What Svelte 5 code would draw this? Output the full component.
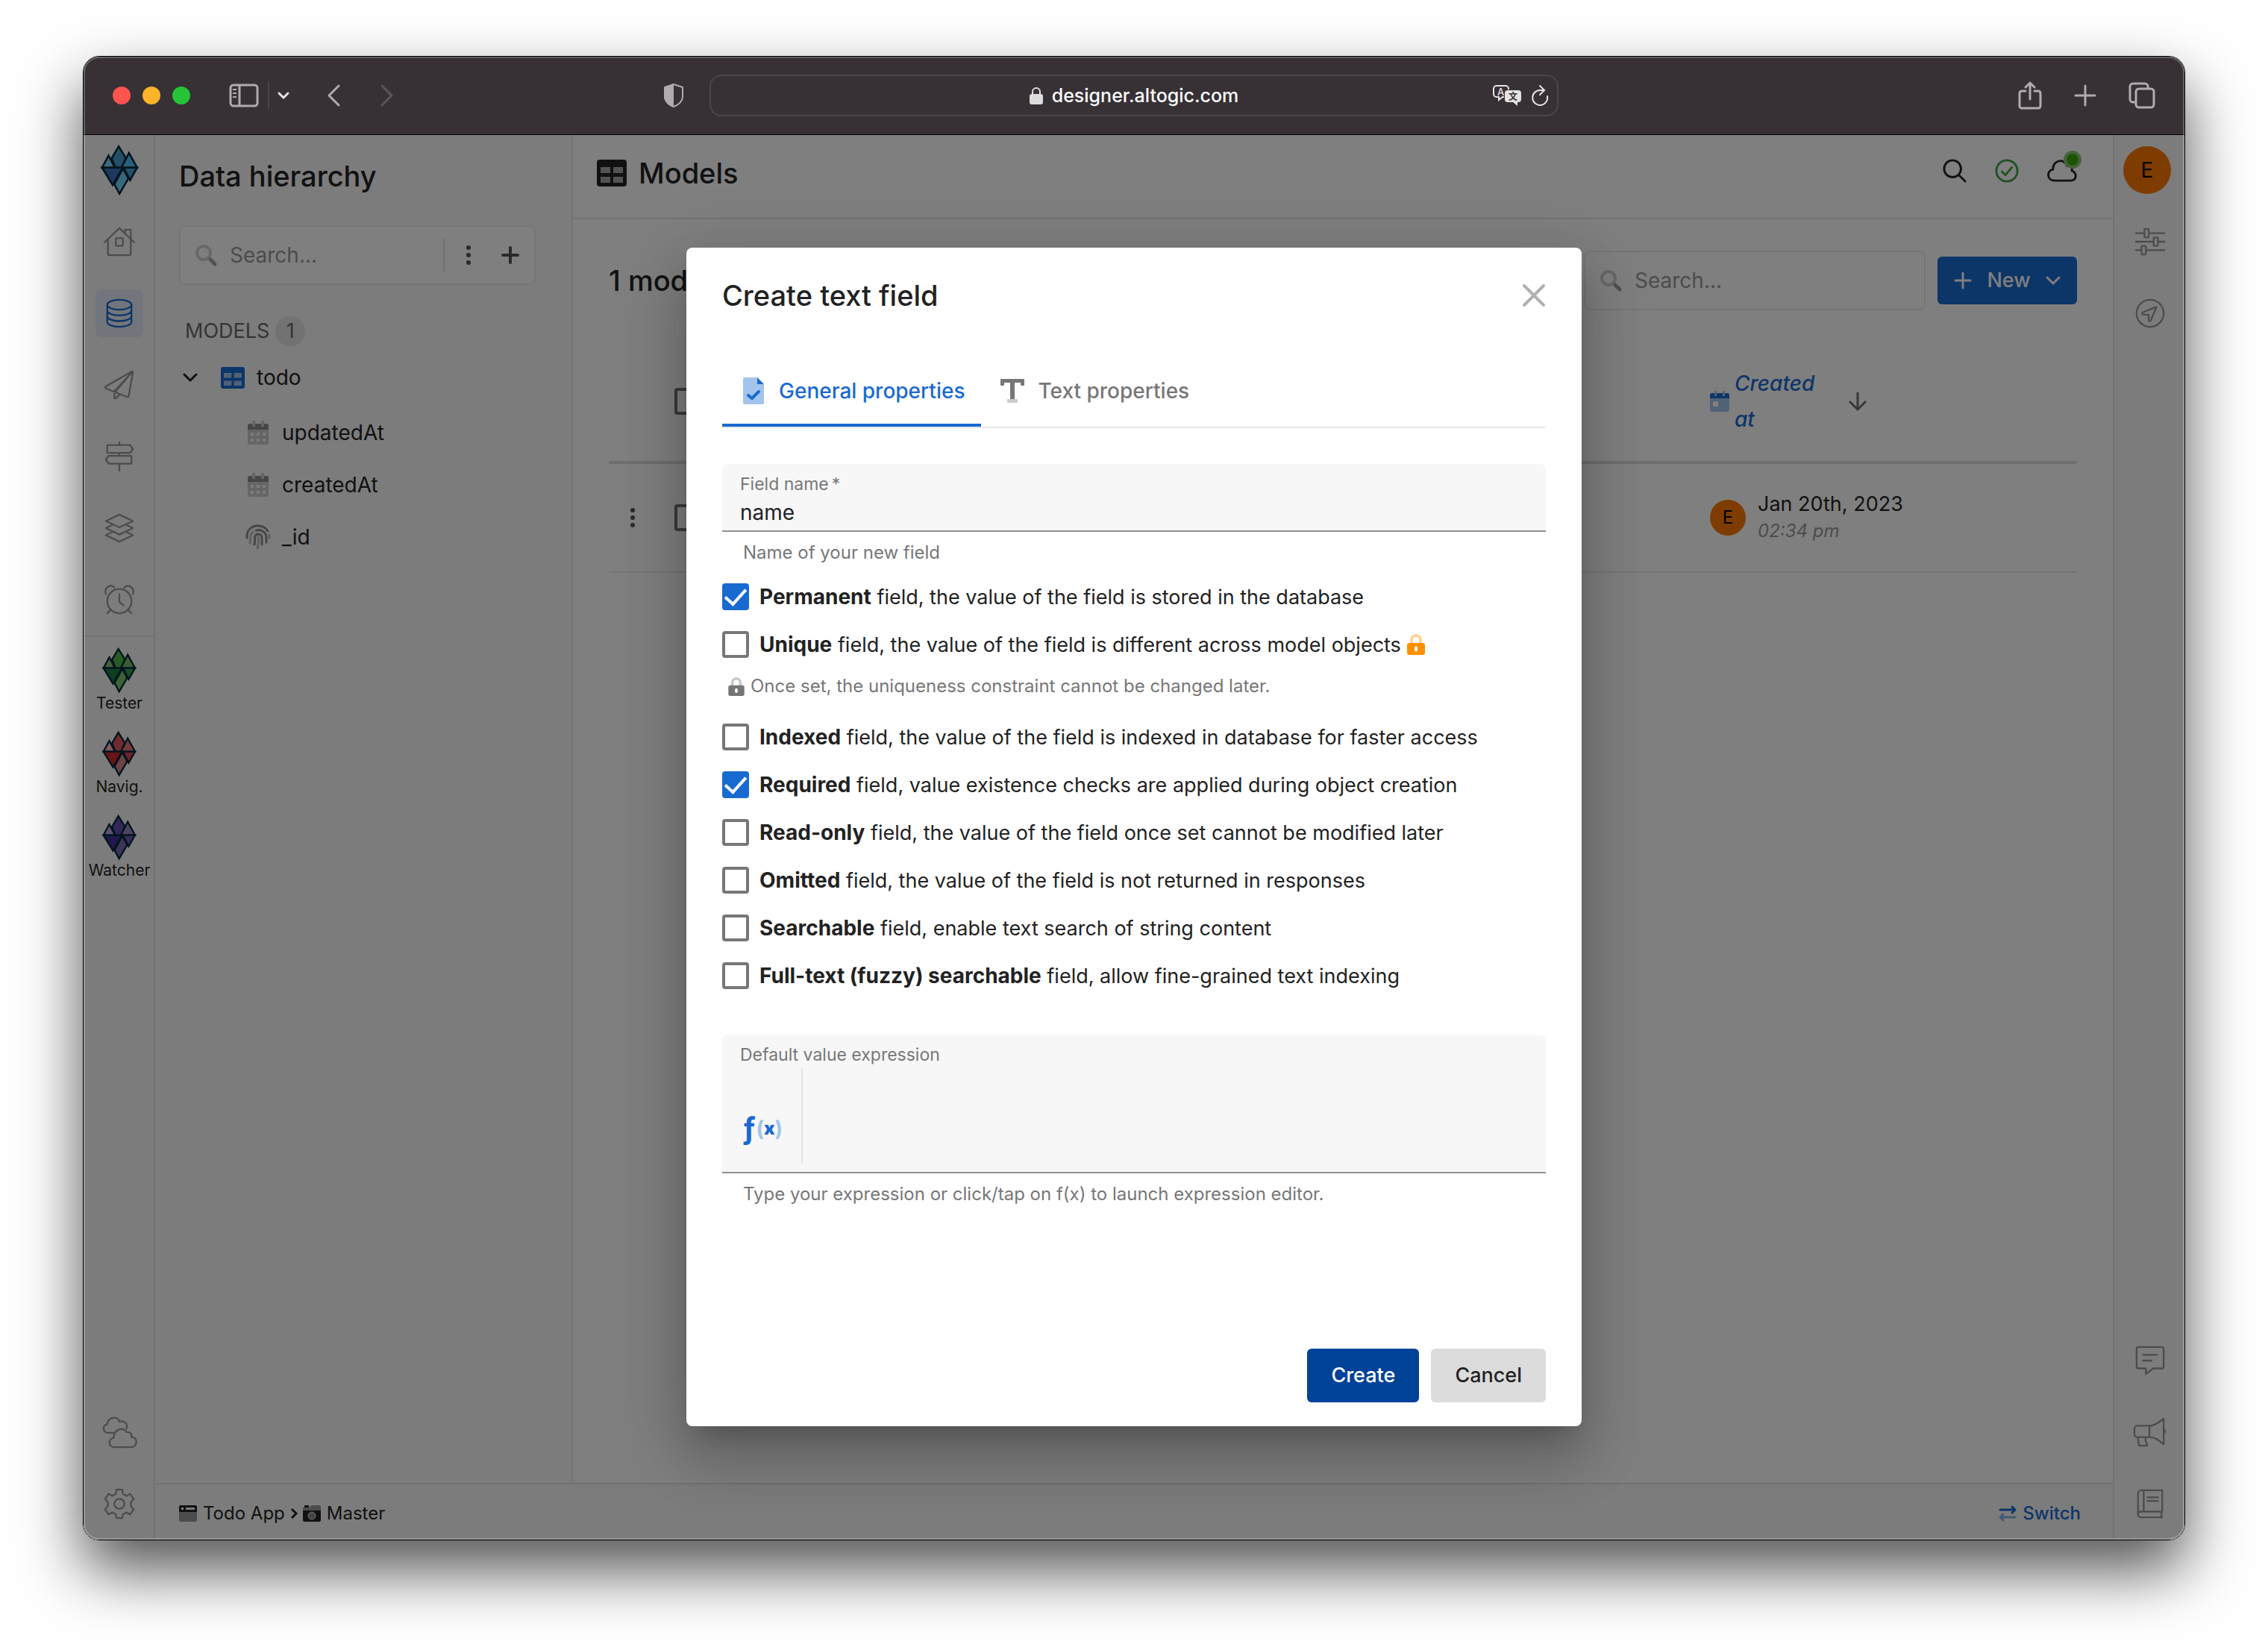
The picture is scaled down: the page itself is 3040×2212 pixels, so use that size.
<script>
  let fieldName = $state('name');
  let expression = $state('');

  const shortcuts = ['home', 'database', 'plane', 'signs', 'layers', 'alarm'];
  const labels = {
    home: 'Home', database: 'Data', plane: 'Endpoints', signs: 'Routes', layers: 'Services', alarm: 'Schedules',
    clouds: 'Deployments', gear: 'Settings', sliders: 'Preferences', compass: 'Explore',
    chat: 'Feedback', megaphone: 'Announcements', book: 'Documentation'
  };

  const blue = ['#489cd0', '#80d4fc', '#56bef4', '#3874c0', '#74cef8', '#48a0d4'];
  const tools = [
    { name: 'Tester', colors: ['#4cb844', '#8ebc78', '#74bc6a', '#187c40', '#7ac46c', '#369a50'] },
    { name: 'Navig.', colors: ['#e4545c', '#ffb4bc', '#e8747a', '#d02830', '#dc8488', '#d84850'] },
    { name: 'Watcher', colors: ['#6850b4', '#bca8e0', '#9c88c0', '#403098', '#7c68b0', '#7058a8'] }
  ];

  const fields = [
    { name: 'updatedAt', icon: 'calendar' },
    { name: 'createdAt', icon: 'calendar' },
    { name: '_id', icon: 'fingerprint' }
  ];

  let primary = $state([
    { name: 'Permanent', text: 'field, the value of the field is stored in the database', on: true },
    { name: 'Unique', text: 'field, the value of the field is different across model objects', on: false, locked: true }
  ]);
  let secondary = $state([
    { name: 'Indexed', text: 'field, the value of the field is indexed in database for faster access', on: false },
    { name: 'Required', text: 'field, value existence checks are applied during object creation', on: true },
    { name: 'Read-only', text: 'field, the value of the field once set cannot be modified later', on: false },
    { name: 'Omitted', text: 'field, the value of the field is not returned in responses', on: false },
    { name: 'Searchable', text: 'field, enable text search of string content', on: false },
    { name: 'Full-text (fuzzy) searchable', text: 'field, allow fine-grained text indexing', on: false }
  ]);
</script>

{#snippet gem(colors)}
  <svg class="gem" viewBox="0 0 140 190" stroke="#00283a" stroke-width="7" stroke-linejoin="miter" aria-hidden="true">
    <path d="M66 8 40 52 54 86H78L92 50Z" fill={colors[0]} />
    <path d="M29 42 5 86H52Z" fill={colors[1]} />
    <path d="M104 32 76 86H134Z" fill={colors[2]} />
    <path d="M84 86H134L108 132Z" fill={colors[5]} />
    <path d="M5 86H81L44 150Z" fill={colors[3]} />
    <path d="M82 89 102 126 69 182 50 147Z" fill={colors[4]} />
  </svg>
{/snippet}

{#snippet railIcon(name)}
  <svg class="line" viewBox="0 0 44 44" aria-hidden="true">
    {#if name === 'home'}
      <path d="M1 23 22 3 43 23M6 19V39a2 2 0 0 0 2 2H36a2 2 0 0 0 2-2V19M30 10V5H38V18" />
      <rect x="17" y="17" width="10" height="11" rx="2" />
    {:else if name === 'database'}
      <ellipse cx="22" cy="10" rx="17" ry="7" />
      <path d="M5 10V34c0 4 8 7 17 7s17-3 17-7V10M5 18c0 4 8 7 17 7s17-3 17-7M5 26c0 4 8 7 17 7s17-3 17-7" />
    {:else if name === 'plane'}
      <path d="M40 3 3 24c-1 1-1 2 0 3L33 39c1 0 2 0 2-1L41 4c0-1 0-1-1-1ZM40 4 15 31V41l2 0 6-6M17 31 33 12" />
    {:else if name === 'signs'}
      <path d="M22 2V6M22 17V21M22 32V42M6 6H37l4 5.500-4 5.500H6a1 1 0 0 1-1-1V7a1 1 0 0 1 1-1ZM38 21H7L3 26.500 7 32H38a1 1 0 0 0 1-1V22a1 1 0 0 0-1-1Z" />
    {:else if name === 'layers'}
      <path d="M22 3 41 12 22 21 3 12ZM13 17 3 22 22 31 41 22 31 17M13 27 3 32 22 41 41 32 31 27" />
    {:else if name === 'alarm'}
      <circle cx="22" cy="24" r="17" />
      <path d="M22 14V25L28 30M10 36 5 41M34 36 39 41M3 14C0 5 10-1 15 5M41 14C44 5 34-1 29 5" />
    {:else if name === 'clouds'}
      <path d="M14 23H6C-2 22-2 12 5 11 6 0 20-1 22 7c8-2 12 4 10 10" />
      <path d="M15 43C6 43 6 31 14 30 14 17 29 14 32 22c5-1 8 3 7 7 9 0 9 13 0 14Z" />
    {:else if name === 'gear'}
      <path d="M18 2H26L27 8 32 11 37 8 42 15 38 20V25L42 30 37 37 32 34 27 37 26 42H18L17 37 12 34 7 37 2 30 6 25V20L2 15 7 8 12 11 17 8Z" />
      <circle cx="22" cy="22" r="7" />
    {:else if name === 'sliders'}
      <path d="M2 10H14M21 10H42M2 22H27M34 22H42M2 34H9M16 34H42" />
      <rect x="14" y="4" width="6" height="12" rx="1" />
      <rect x="27" y="16" width="6" height="12" rx="1" />
      <rect x="10" y="28" width="6" height="12" rx="1" />
    {:else if name === 'compass'}
      <circle cx="22" cy="22" r="19" />
      <path d="M31 13 11 21c-1 1 0 3 1 3h8v8c0 1 2 2 3 0Z" />
    {:else if name === 'chat'}
      <path d="M6 3H38a3 3 0 0 1 3 3V30a3 3 0 0 1-3 3H26L16 41V33H6a3 3 0 0 1-3-3V6a3 3 0 0 1 3-3ZM12 14H32M12 22H24" />
    {:else if name === 'megaphone'}
      <path d="M21 13H4a4 4 0 0 0-4 4V25a4 4 0 0 0 4 4H21ZM21 13C30 13 35 7 41 3V39C35 34 30 29 21 29M5 29C5 35 6 41 8 41H18L17 37C15 35 15 32 16 29M41 18q4 3 0 6" />
    {:else if name === 'book'}
      <path d="M39 33V3H10a5 5 0 0 0-5 5V37M39 33H9a4 4 0 0 0 0 8H39M38 33V41M13 3V33M18 13H33M18 18H33" />
    {/if}
  </svg>
{/snippet}

{#snippet railButton(name, active = false)}
  <button class="rail-btn" class:active aria-label={labels[name]}>{@render railIcon(name)}</button>
{/snippet}

{#snippet grid(cls)}
  <svg class={cls} viewBox="0 0 40 36" aria-hidden="true">
    <rect width="40" height="36" rx="4" fill="currentColor" />
    <path d="M5 10H18V18H5ZM22 10H35V18H22ZM5 23H18V31H5ZM22 23H35V31H22Z" fill="#fff" opacity=".6" />
  </svg>
{/snippet}

{#snippet magnifier()}
  <svg class="magnifier" viewBox="0 0 28 28" fill="none" aria-hidden="true">
    <circle cx="11" cy="11" r="9" stroke="#d0d0d0" stroke-width="4" />
    <path d="M20 20 26 26" stroke="#a0a0a0" stroke-width="5" stroke-linecap="round" />
  </svg>
{/snippet}

{#snippet dots()}
  <svg class="dots" viewBox="0 0 8 28" fill="currentColor" aria-hidden="true">
    <circle cx="4" cy="4" r="3" /><circle cx="4" cy="14" r="3" /><circle cx="4" cy="24" r="3" />
  </svg>
{/snippet}

{#snippet plus()}
  <svg class="plus" viewBox="0 0 24 24" stroke="currentColor" stroke-width="4" stroke-linecap="round" aria-hidden="true">
    <path d="M12 2V22M2 12H22" />
  </svg>
{/snippet}

{#snippet lock()}
  <svg class="lock" viewBox="0 0 24 28" fill="none" aria-hidden="true">
    <path d="M6 13V8a6 6 0 0 1 12 0V13" stroke="currentColor" stroke-width="4" opacity=".4" />
    <path fill-rule="evenodd" d="M3 12H21a3 3 0 0 1 3 3V25a3 3 0 0 1-3 3H3a3 3 0 0 1-3-3V15a3 3 0 0 1 3-3ZM12 16.500a2 2 0 0 0-2 2V21.500a2 2 0 0 0 4 0V18.500a2 2 0 0 0-2-2Z" fill="currentColor" />
  </svg>
{/snippet}

{#snippet option(item)}
  <label class="option">
    <input type="checkbox" bind:checked={item.on} />
    <span><b>{item.name}</b> {item.text}</span>
    {#if item.locked}{@render lock()}{/if}
  </label>
{/snippet}

<div class="desktop">
  <div class="window">
    <header class="chrome">
      <div class="chrome-left">
        <span class="lights"><i class="red"></i><i class="amber"></i><i class="green"></i></span>
        <button aria-label="Sidebar">
          <svg width="40" height="32" viewBox="0 0 40 32" fill="none" stroke="#b0abae" stroke-width="3">
            <rect x="2" y="2" width="36" height="28" rx="4" /><path d="M14 2V30" />
            <path d="M5 8H10M5 13H10M5 18H10" stroke-width="2" />
          </svg>
        </button>
        <span class="rule"></span>
        <button aria-label="Tab groups">
          <svg width="16" height="12" viewBox="0 0 16 12" fill="none" stroke="#e4e2e3" stroke-width="3" stroke-linecap="round" stroke-linejoin="round"><path d="M2 3 8 9 14 3" /></svg>
        </button>
        <button class="back" aria-label="Back">
          <svg width="18" height="30" viewBox="0 0 18 30" fill="none" stroke="#b0abae" stroke-width="3" stroke-linecap="round" stroke-linejoin="round"><path d="M16 2 3 15 16 28" /></svg>
        </button>
        <button class="forward" aria-label="Forward">
          <svg width="18" height="30" viewBox="0 0 18 30" fill="none" stroke="#5b565a" stroke-width="3" stroke-linecap="round" stroke-linejoin="round"><path d="M2 2 15 15 2 28" /></svg>
        </button>
        <button class="shield" aria-label="Privacy report">
          <svg width="28" height="34" viewBox="0 0 28 34"><path d="M14 2 26 6V18C26 25 20 30 14 32 8 30 2 25 2 18V6Z" fill="none" stroke="#b0abae" stroke-width="2" stroke-linejoin="round" /><path d="M14 1 1 6V18C1 25 7 31 14 33Z" fill="#b0abae" /></svg>
        </button>
      </div>
      <div class="address">
        <svg width="18" height="24" viewBox="0 0 18 24" aria-hidden="true"><path d="M4 11V7a5 5 0 0 1 10 0V11" fill="none" stroke="#dedcdd" stroke-width="2" /><rect y="10" width="18" height="14" rx="3" fill="#dedcdd" /></svg>
        <span>designer.altogic.com</span>
        <div class="address-tools">
          <button aria-label="Translate">
            <svg width="38" height="28" viewBox="0 0 38 28" aria-hidden="true">
              <path d="M5 1H17a4 4 0 0 1 4 4V6M15 16H13L8 20V16H5a4 4 0 0 1-4-4V5a4 4 0 0 1 4-4" fill="none" stroke="#e4e2e3" stroke-width="2" />
              <path d="M20 7H34a4 4 0 0 1 4 4V19a4 4 0 0 1-4 4H33V28L27 23H20a4 4 0 0 1-4-4V11a4 4 0 0 1 4-4Z" fill="#e4e2e3" />
              <text x="6" y="14" font-size="13" fill="#e4e2e3">A</text>
              <text x="21" y="20" font-size="12" font-weight="700" fill="#373135">文</text>
            </svg>
          </button>
          <button aria-label="Reload">
            <svg width="22" height="28" viewBox="0 0 22 28" fill="none" stroke="#e4e2e3" stroke-width="2" stroke-linecap="round" aria-hidden="true"><path d="M21 15A10 10 0 1 1 11 7H16M11 1 17 7 11 13" /></svg>
          </button>
        </div>
      </div>
      <div class="chrome-right">
        <button aria-label="Share"><svg width="32" height="38" viewBox="0 0 32 38" fill="none" stroke="#b0abae" stroke-width="3" stroke-linecap="round" stroke-linejoin="round"><path d="M10 13H5a3 3 0 0 0-3 3V33a3 3 0 0 0 3 3H27a3 3 0 0 0 3-3V16a3 3 0 0 0-3-3H22M16 24V2M10 8 16 2 22 8" /></svg></button>
        <button aria-label="New tab"><svg width="28" height="28" viewBox="0 0 28 28" stroke="#b0abae" stroke-width="3" stroke-linecap="round"><path d="M14 1V27M1 14H27" /></svg></button>
        <button aria-label="Tab overview"><svg width="36" height="36" viewBox="0 0 36 36" fill="none" stroke="#b0abae" stroke-width="3"><rect x="10" y="9" width="24" height="25" rx="4" /><path d="M9 27H6a4 4 0 0 1-4-4V6A4 4 0 0 1 6 2H22a4 4 0 0 1 4 4V8" /></svg></button>
      </div>
    </header>

    <div class="app">
      <nav class="rail left">
        <a class="brand" href="#home" aria-label="Altogic">{@render gem(blue)}</a>
        {#each shortcuts as name}{@render railButton(name, name === 'database')}{/each}
        <div class="tools">
          {#each tools as tool}
            <button class="tool">{@render gem(tool.colors)}<span>{tool.name}</span></button>
          {/each}
        </div>
        <span class="push"></span>
        {@render railButton('clouds')}
        {@render railButton('gear')}
      </nav>

      <div class="workspace">
        <div class="columns">
          <aside class="sidebar">
            <h1>Data hierarchy</h1>
            <div class="search">
              {@render magnifier()}
              <input type="text" placeholder="Search..." aria-label="Search hierarchy" />
              <span class="search-rule"></span>
              <button aria-label="More">{@render dots()}</button>
              <button aria-label="Add">{@render plus()}</button>
            </div>
            <p class="group">MODELS <span>1</span></p>
            <ul class="tree">
              <li>
                <button class="node">
                  <svg width="20" height="12" viewBox="0 0 20 12" fill="none" stroke="#222" stroke-width="3" stroke-linecap="round" stroke-linejoin="round" aria-hidden="true"><path d="M2 2 10 10 18 2" /></svg>
                  {@render grid('grid-small')}
                  todo
                </button>
                <ul>
                  {#each fields as field}
                    <li>
                      <button class="leaf">
                        {#if field.icon === 'calendar'}
                          <svg width="32" height="32" viewBox="0 0 32 32" aria-hidden="true">
                            <path d="M2 12H30V29a3 3 0 0 1-3 3H5a3 3 0 0 1-3-3ZM8 0H12V8H8ZM20 0H24V8H20Z" fill="#cacaca" />
                            <path d="M5 4H8V8H12V4H20V8H24V4H27a3 3 0 0 1 3 3V12H2V7a3 3 0 0 1 3-3Z" fill="#8c8c8c" />
                            <path d="M6 16H10V20H6ZM14 16H18V20H14ZM22 16H26V20H22ZM6 24H10V28H6ZM14 24H18V28H14ZM22 24H26V28H22Z" fill="#f8f8f8" />
                          </svg>
                        {:else}
                          <svg width="32" height="32" viewBox="0 0 32 32" fill="none" stroke-width="3" stroke-linecap="round" aria-hidden="true">
                            <path d="M1 17C0 5 10 0 17 1 23 1 27 5 29 8M13 7c8-2 14 3 14 10V23M11 26C12 20 11 17 12 15c1-4 8-4 9 1V26" stroke="#8c8c8c" />
                            <path d="M31 13V17M5 24C6 20 5 18 6 14 7 11 8 10 9 9M16 16C17 22 16 27 15 31" stroke="#bcbcbc" />
                          </svg>
                        {/if}
                        {field.name}
                      </button>
                    </li>
                  {/each}
                </ul>
              </li>
            </ul>
          </aside>

          <main>
            <div class="page-head">
              {@render grid('grid-large')}
              <h1>Models</h1>
              <div class="status">
                <button aria-label="Search"><svg width="32" height="32" viewBox="0 0 34 34" fill="none" stroke="#222" stroke-width="3" stroke-linecap="round"><circle cx="14" cy="14" r="12" /><path d="M23 23 32 32" /></svg></button>
                <button aria-label="Status"><svg width="32" height="32" viewBox="0 0 34 34" fill="none" stroke="#40a044" stroke-width="3" stroke-linecap="round"><circle cx="17" cy="17" r="15" /><path d="M10 18 15 23 24 12" /></svg></button>
                <button class="cloud" aria-label="Deployment"><svg width="40" height="30" viewBox="0 0 42 32" fill="none" stroke="#222" stroke-width="3"><path d="M11 30C-2 30-1 15 8 14 7 1 24-3 28 9 33 8 36 11 35 16 43 19 42 30 33 30Z" /></svg><i></i></button>
              </div>
            </div>
            <div class="toolbar">
              <h2>1 model</h2>
              <div class="search wide">{@render magnifier()}<input type="text" placeholder="Search..." aria-label="Search models" /></div>
              <button class="new">{@render plus()} New
                <svg width="20" height="12" viewBox="0 0 20 12" fill="none" stroke="#fff" stroke-width="3" stroke-linecap="round" stroke-linejoin="round" aria-hidden="true"><path d="M2 2 10 10 18 2" /></svg>
              </button>
            </div>
            <table>
              <thead>
                <tr>
                  <th class="c-menu"></th>
                  <th class="c-check"><input type="checkbox" aria-label="Select all" /></th>
                  <th>Name</th>
                  <th class="c-date">
                    <button class="sort">
                      <svg width="26" height="28" viewBox="0 0 26 28" aria-hidden="true">
                        <path d="M0 10H26V25a3 3 0 0 1-3 3H3a3 3 0 0 1-3-3Z" fill="#a3c3ec" /><path d="M3 3H23a3 3 0 0 1 3 3V10H0V6A3 3 0 0 1 3 3Z" fill="#186ad0" /><path d="M6 0H9V7H6ZM17 0H20V7H17Z" fill="#a3c3ec" /><path d="M4 14H11V21H4Z" fill="#fff" />
                      </svg>
                      <em>Created at</em>
                      <svg width="26" height="26" viewBox="0 0 26 26" fill="none" stroke="#707070" stroke-width="3" aria-hidden="true"><path d="M13 1V24M2 13 13 24 24 13" /></svg>
                    </button>
                  </th>
                </tr>
              </thead>
              <tbody>
                <tr>
                  <td class="c-menu"><button aria-label="Row menu">{@render dots()}</button></td>
                  <td class="c-check"><input type="checkbox" aria-label="Select todo" /></td>
                  <td>todo</td>
                  <td class="c-date">
                    <div class="created">
                      <span class="avatar small">E</span>
                      <div><p>Jan 20th, 2023</p><p class="time">02:34 pm</p></div>
                    </div>
                  </td>
                </tr>
              </tbody>
            </table>
          </main>
        </div>

        <footer class="statusbar">
          <svg width="24" height="22" viewBox="0 0 24 22" aria-hidden="true"><path d="M0 9H24V20a2 2 0 0 1-2 2H2a2 2 0 0 1-2-2Z" fill="#999" /><path fill-rule="evenodd" d="M2 0H22a2 2 0 0 1 2 2V9H0V2A2 2 0 0 1 2 0ZM3 3H6V6H3ZM9 3H21V6H9Z" fill="#222" /></svg>
          <span>Todo App</span>
          <svg width="8" height="16" viewBox="0 0 8 16" fill="none" stroke="#222" stroke-width="3" aria-hidden="true"><path d="M1 2 7 8 1 14" /></svg>
          <svg width="24" height="22" viewBox="0 0 24 22" aria-hidden="true"><path d="M2 0H8V3H2Z" fill="#222" /><path d="M0 7V3H8L12 0H22a2 2 0 0 1 2 2V7Z" fill="#999" /><path d="M0 7H24V20a2 2 0 0 1-2 2H2a2 2 0 0 1-2-2Z" fill="#222" /><circle cx="12" cy="14" r="5" fill="#888" stroke="#ddd" /></svg>
          <span>Master</span>
          <a class="switch" href="#switch">
            <svg width="24" height="20" viewBox="0 0 24 20" fill="none" stroke="#186ad0" stroke-width="3" stroke-linecap="round" stroke-linejoin="round" aria-hidden="true"><path d="M2 5H22M18 1 22 5 18 9" /><path d="M22 15H2M6 11 2 15 6 19" opacity=".5" /></svg>
            Switch
          </a>
        </footer>
      </div>

      <nav class="rail right">
        <button class="avatar account" aria-label="Account">E</button>
        {@render railButton('sliders')}
        {@render railButton('compass')}
        <span class="push"></span>
        {@render railButton('chat')}
        {@render railButton('megaphone')}
        {@render railButton('book')}
      </nav>

      <div class="scrim">
        <div class="modal" role="dialog" aria-modal="true" aria-labelledby="dialog-title">
          <div class="modal-head">
            <h2 id="dialog-title">Create text field</h2>
            <button aria-label="Close"><svg width="32" height="32" viewBox="0 0 32 32" stroke="#b0b0b0" stroke-width="4" stroke-linecap="round"><path d="M3 3 29 29M29 3 3 29" /></svg></button>
          </div>
          <div class="tabs" role="tablist">
            <button class="tab selected" role="tab" aria-selected="true">
              <svg width="36" height="36" viewBox="0 0 36 36" aria-hidden="true"><path d="M6 0H23V9H32V34a2 2 0 0 1-2 2H6a2 2 0 0 1-2-2V2A2 2 0 0 1 6 0Z" fill="#a3c4ec" /><path d="M23 0 32 9H23Z" fill="#186ad0" /><path d="M11 24 16 28 25 19" fill="none" stroke="#186ad0" stroke-width="4" stroke-linecap="round" /></svg>
              General properties
            </button>
            <button class="tab" role="tab" aria-selected="false">
              <svg width="36" height="36" viewBox="0 0 36 36" fill="#777" aria-hidden="true"><rect x="2" y="2" width="32" height="5" rx="1" /><rect x="2" y="2" width="5" height="9" rx="1" /><rect x="29" y="2" width="5" height="9" rx="1" /><rect x="15" y="4" width="6" height="26" /><rect x="11" y="29" width="14" height="5" rx="1" fill="#cbcbcb" /></svg>
              Text properties
            </button>
          </div>

          <div class="filled">
            <label for="field-name">Field name<span class="star">*</span></label>
            <input id="field-name" type="text" bind:value={fieldName} />
          </div>
          <p class="hint">Name of your new field</p>

          <div class="options">
            {#each primary as item}{@render option(item)}{/each}
            <p class="note">{@render lock()} Once set, the uniqueness constraint cannot be changed later.</p>
            {#each secondary as item}{@render option(item)}{/each}
          </div>

          <div class="filled expression">
            <label for="expression">Default value expression</label>
            <div class="editor">
              <button aria-label="Launch expression editor"><span class="fn">ƒ</span><span class="paren">(</span><span class="arg">x</span><span class="paren">)</span></button>
              <textarea id="expression" bind:value={expression}></textarea>
            </div>
          </div>
          <p class="hint">Type your expression or click/tap on f(x) to launch expression editor.</p>

          <div class="actions">
            <button class="create">Create</button>
            <button class="cancel">Cancel</button>
          </div>
        </div>
      </div>
    </div>
  </div>
</div>

<style>
  :global(body) { background: #fff; }
  .desktop, .desktop * { box-sizing: border-box; }
  .desktop {
    display: flex;
    min-height: 100vh;
    padding: 75px 111px 147px;
    font: 400 28px/40px Inter, "Noto Sans CJK SC", sans-serif;
    color: #222;
  }
  h1, h2, p, ul { margin: 0; padding: 0; }
  ul { list-style: none; }
  h1, h2 { font-size: 38px; line-height: 48px; font-weight: 500; }
  button { padding: 0; border: 0; background: none; font: inherit; color: inherit; display: flex; align-items: center; justify-content: center; }
  input, textarea { font: inherit; color: inherit; min-width: 0; padding: 0; margin: 0; border: 0; background: none; outline: 0; }
  svg { display: block; flex: none; overflow: visible; }
  a { text-decoration: none; color: inherit; }

  .window {
    position: relative;
    flex: 1;
    min-width: 0;
    display: flex;
    flex-direction: column;
    border: 1px solid #000;
    border-radius: 22px;
    overflow: hidden;
    box-shadow: 0 40px 84px rgba(0, 0, 0, .68);
  }
  .window::after {
    content: "";
    position: absolute;
    inset: 0;
    border-radius: 21px;
    box-shadow: inset 0 0 0 2px rgba(255, 255, 255, .22);
    pointer-events: none;
  }

  .chrome {
    display: grid;
    grid-template-columns: 1fr minmax(0, 1138px) 1fr;
    align-items: center;
    height: 105px;
    padding: 0 39px;
    background: #373135;
    border-bottom: 1px solid #000;
  }
  .chrome-left, .chrome-right { display: flex; align-items: center; }
  .lights { display: flex; gap: 16px; margin-right: 52px; }
  .lights i { width: 24px; height: 24px; border-radius: 50%; }
  .red { background: #ff5450; }
  .amber { background: #fdb429; }
  .green { background: #26c338; }
  .rule { width: 2px; height: 36px; margin: 0 11px 0 12px; background: #4a4448; }
  .back { margin-left: 50px; }
  .forward { margin-left: 54px; }
  .shield { margin: 0 34px 0 auto; }
  .address {
    position: relative;
    display: flex;
    align-items: center;
    justify-content: center;
    gap: 12px;
    height: 56px;
    border: 2px solid #4b464a;
    border-radius: 16px;
    color: #fff;
    font-size: 25px;
    font-weight: 500;
  }
  .address-tools { position: absolute; right: 12px; display: flex; gap: 14px; }
  .chrome-right { justify-content: flex-end; gap: 44px; }

  .app { position: relative; flex: 1; display: flex; background: #fff; }
  .rail {
    display: flex;
    flex-direction: column;
    align-items: center;
    gap: 32px;
    width: 96px;
    padding: 15px 0 16px 2px;
    background: #f8f8f8;
  }
  .left { border-right: 2px solid #e4e4e4; }
  .right { border-left: 2px solid #e4e4e4; }
  .brand { display: flex; align-items: center; height: 64px; }
  .gem { width: 46px; height: 63px; }
  .brand .gem { width: 51px; height: 70px; }
  .rail-btn { width: 64px; height: 64px; border-radius: 8px; color: #989898; }
  .rail-btn.active { background: #e4ecf8; color: #186ad0; }
  .line { width: 42px; height: 42px; fill: none; stroke: currentColor; stroke-width: 2.4; stroke-linejoin: round; stroke-linecap: round; }
  .push { flex: 1; }
  .tools { display: flex; flex-direction: column; align-items: center; gap: 24px; align-self: stretch; margin: -16px 0 0 -2px; padding: 13px 0 0 2px; border-top: 2px solid #e4e4e4; }
  .tool { flex-direction: column; gap: 1px; font-size: 21px; line-height: 24px; }

  .workspace { flex: 1; min-width: 0; display: flex; flex-direction: column; }
  .columns { flex: 1; display: flex; }
  .sidebar { width: 560px; padding: 31px 48px 0 32px; background: #f8f8f8; border-right: 2px solid #e4e4e4; }
  .search {
    display: flex;
    align-items: center;
    height: 80px;
    margin-top: 42px;
    padding: 0 20px;
    background: #fff;
    border: 2px solid #ececec;
    border-radius: 8px;
    color: #555;
  }
  .search input { flex: 1; margin-left: 18px; }
  .search input::placeholder { color: #999; opacity: 1; }
  .search-rule { width: 2px; height: 44px; margin-right: 28px; background: #e0e0e0; }
  .search button + button { margin-left: 40px; }
  .magnifier { width: 28px; height: 28px; }
  .dots { width: 8px; height: 28px; color: #555; }
  .plus { width: 24px; height: 24px; }
  .group { display: flex; gap: 8px; margin-top: 42px; padding-left: 8px; font-size: 27px; color: #6a6a6a; }
  .group span { width: 40px; height: 40px; border-radius: 50%; background: #e4e4e4; text-align: center; }
  .tree { padding-top: 10px; }
  .tree ul { padding: 7px 0 0 90px; }
  .node { gap: 16px; height: 64px; padding-left: 5px; }
  .leaf { gap: 16px; height: 70px; }
  .grid-small { width: 32px; height: 29px; margin-left: 15px; color: #186ad0; }
  .grid-large { width: 40px; height: 36px; }

  main { flex: 1; min-width: 0; }
  .page-head { display: flex; align-items: center; gap: 16px; height: 113px; padding: 0 48px 10px 32px; border-bottom: 2px solid #e4e4e4; }
  .status { display: flex; align-items: center; gap: 38px; margin: 0 0 6px auto; }
  .cloud { position: relative; }
  .cloud i { position: absolute; top: -12px; right: -6px; width: 24px; height: 24px; border-radius: 50%; background: #3ba808; border: 4px solid #8cc878; }
  .toolbar { display: flex; align-items: center; gap: 16px; padding: 42px 48px; }
  .toolbar h2 { margin-right: auto; }
  .wide { width: 458px; margin: 0; }
  .new { gap: 20px; width: 187px; height: 64px; border-radius: 6px; background: #186ad0; color: #fff; font-size: 27px; font-weight: 500; }
  .new .plus { stroke-width: 3; }

  table { width: calc(100% - 96px); margin: 0 48px; border-collapse: separate; border-spacing: 0; table-layout: fixed; }
  th { height: 164px; padding: 0; border-bottom: 4px solid #dcdcdc; text-align: left; }
  td { height: 146px; padding: 0; border-bottom: 2px solid #e8e8e8; }
  .c-menu { width: 64px; }
  .c-check { width: 96px; padding-left: 24px; }
  .c-date { width: 492px; }
  .c-menu button { width: 64px; }
  .sort { justify-content: flex-start; gap: 7px; color: #186ad0; font-weight: 500; text-align: left; line-height: 48px; }
  .sort em { width: 145px; padding-right: 30px; }
  .created { display: flex; align-items: center; gap: 16px; font-size: 27px; }
  .created p { line-height: 36px; }
  .created .time { font-size: 24px; font-style: italic; color: #999; }
  .avatar { display: flex; align-items: center; justify-content: center; width: 64px; height: 64px; border-radius: 50%; background: #ff7800; color: #000; }
  .avatar.small { width: 48px; height: 48px; font-size: 24px; }
  .account { align-self: flex-start; margin-left: 10px; }

  .statusbar { display: flex; align-items: center; gap: 8px; height: 76px; padding: 4px 43px 0 32px; background: #f8f8f8; border-top: 2px solid #e4e4e4; font-size: 24px; line-height: 32px; }
  .switch { display: flex; align-items: center; gap: 8px; margin-left: auto; color: #186ad0; font-weight: 500; }

  input[type="checkbox"] {
    appearance: none;
    display: grid;
    place-items: center;
    flex: none;
    width: 36px;
    height: 36px;
    border: 4px solid #777;
    border-radius: 4px;
  }
  input[type="checkbox"]:checked { border-color: #186ad0; background: #186ad0; }
  input[type="checkbox"]:checked::after {
    content: "";
    width: 12px;
    height: 24px;
    margin-top: -6px;
    border: solid #fff;
    border-width: 0 4px 4px 0;
    transform: rotate(42deg);
  }

  .scrim { position: absolute; inset: 0; display: flex; justify-content: center; padding: 151px 32px 152px; background: rgba(0, 0, 0, .5); }
  .modal {
    display: flex;
    flex-direction: column;
    width: 1200px;
    padding: 32px 48px;
    border-radius: 8px;
    background: #fff;
    box-shadow: 0 22px 30px -14px rgba(0, 0, 0, .2), 0 48px 76px 6px rgba(0, 0, 0, .14), 0 18px 92px 16px rgba(0, 0, 0, .12);
  }
  .modal-head { display: flex; align-items: center; justify-content: space-between; height: 64px; }
  .tabs { display: flex; margin: 48px 0; border-bottom: 2px solid #e8e8e8; }
  .tab { gap: 16px; height: 96px; padding: 0 22px 0 24px; color: #777; font-weight: 500; }
  .tab.selected { color: #186ad0; box-shadow: inset 0 -4px #186ad0; }
  .filled { display: flex; flex-direction: column; gap: 4px; padding: 13px 24px 4px; border-bottom: 2px solid #909090; border-radius: 8px 8px 0 0; background: #f7f7f7; }
  .filled label { font-size: 23px; line-height: 28px; color: #777; }
  .star { margin-left: 4px; }
  .filled input { height: 40px; }
  .hint { margin-top: 12px; padding-left: 28px; font-size: 24px; line-height: 32px; color: #777; }
  .options { margin: 11px 0 47px; }
  .option { display: flex; align-items: center; gap: 14px; height: 64px; font-size: 27px; }
  .option b { font-size: 28px; font-weight: 700; }
  .lock { width: 24px; height: 28px; color: #ff9000; }
  .option .lock { margin-left: -6px; }
  .note { display: flex; align-items: center; gap: 8px; margin: 8px 0 20px; padding-left: 8px; font-size: 24px; line-height: 32px; color: #777; }
  .note .lock { width: 22px; height: 25px; color: #757575; }
  .expression { padding-bottom: 11px; }
  .editor { display: flex; height: 128px; }
  .editor button { width: 84px; padding: 34px 22px 0 0; border-right: 2px solid #e2e2e2; color: #186ad0; font-weight: 700; }
  .editor textarea { flex: 1; resize: none; padding: 12px; }
  .fn { font-size: 40px; }
  .arg { font-size: 24px; font-weight: 900; }
  .paren { font-size: 28px; color: #a3c4ec; }
  .actions { display: flex; justify-content: flex-end; gap: 16px; margin-top: auto; font-size: 27px; font-weight: 500; }
  .actions button { height: 72px; padding: 0 32px; border-radius: 6px; }
  .create { background: #004298; color: #fff; }
  .cancel { background: #dcdcdc; }
</style>
